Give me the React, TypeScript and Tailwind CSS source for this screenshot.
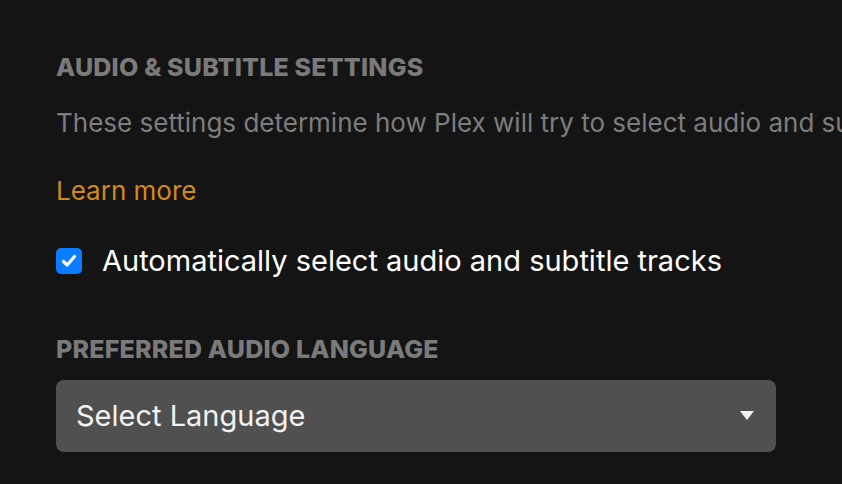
import React from "react";

export default function App() {
  return (
    <div
      className="w-[842px] h-[484px] overflow-hidden bg-[#141414] pl-[56px] pt-[51px]"
      style={{ fontFamily: "Inter, 'Noto Sans', sans-serif" }}
    >
      <h2 className="text-[25px] leading-[32px] font-extrabold tracking-[0.2px] text-[#7a7a7a] whitespace-nowrap">
        AUDIO &amp; SUBTITLE SETTINGS
      </h2>
      <p className="mt-[20px] text-[26px] leading-[40px] text-[#7d7d7d] whitespace-nowrap overflow-hidden">
        These settings determine how Plex will try to select audio and subtitle tracks for you.
      </p>
      <a className="block mt-[28px] text-[26px] leading-[40px] text-[#d3891c] whitespace-nowrap">
        Learn more
      </a>
      <label className="mt-[30px] flex items-center gap-[20px] h-[40px]">
        <span className="w-[26px] h-[26px] rounded-[5px] bg-[#0a7cff] flex items-center justify-center">
          <svg width="18" height="18" viewBox="0 0 18 18">
            <path d="M3.5 9.5 L7.2 13 L14.5 4.5" fill="none" stroke="white" strokeWidth="3.2" strokeLinecap="round" strokeLinejoin="round" />
          </svg>
        </span>
        <span className="text-[29px] leading-[40px] text-white whitespace-nowrap">
          Automatically select audio and subtitle tracks
        </span>
      </label>
      <h3 className="mt-[52px] text-[25px] leading-[32px] font-extrabold tracking-[0.2px] text-[#7a7a7a] whitespace-nowrap">
        PREFERRED AUDIO LANGUAGE
      </h3>
      <div className="mt-[15px] w-[720px] h-[72px] rounded-[8px] bg-[#505050] flex items-center justify-between pl-[20px] pr-[22px]">
        <span className="text-[29px] text-[#f2f2f2]">Select Language</span>
        <svg width="14" height="10" viewBox="0 0 14 10">
          <path d="M0 0 H14 L7 9 Z" fill="#f2f2f2" />
        </svg>
      </div>
    </div>
  );
}
